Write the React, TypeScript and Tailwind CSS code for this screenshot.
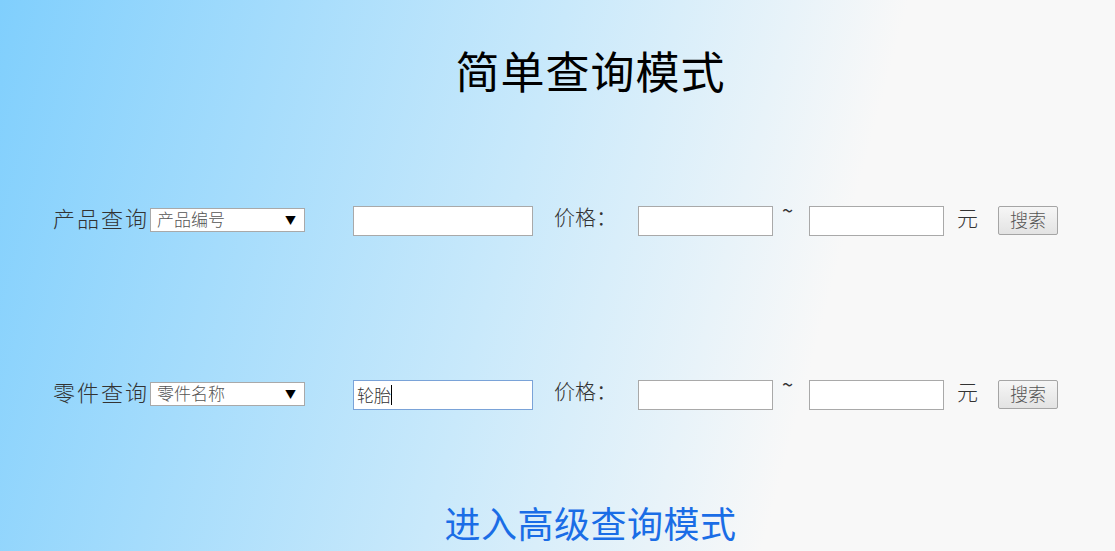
import React from "react";

const cjk = { fontFamily: '"Noto Sans CJK SC", "Noto Sans", sans-serif' };

function Row({ label, option, value }: { label: string; option: string; value?: string }) {
  return (
    <div className="flex items-center h-[30px] pl-[53px]" style={cjk}>
      <span className="text-[22px] font-light leading-none text-[#333] tracking-[2px] -mt-[9px]">{label}</span>
      <div className="ml-[1px] -mt-[2px] w-[155px] h-[24px] bg-white border border-[#a9a9a9] flex items-center justify-between pl-[6px] pr-[8px]">
        <span className="relative -top-[2px] text-[17px] font-light text-[#555] leading-none">{option}</span>
        <span className="text-[11px] text-black leading-none">▼</span>
      </div>
      {value ? (
        <div className="ml-[48px] w-[180px] h-[30px] bg-white border border-[#7aa3d8] flex items-center pl-[3px]">
          <span className="relative -top-[1px] text-[17px] font-light text-[#333] leading-none">{value}</span>
          <span className="w-px h-[20px] bg-black"></span>
        </div>
      ) : (
        <div className="ml-[48px] w-[180px] h-[30px] bg-white border border-[#a9a9a9]"></div>
      )}
      <span className="ml-[21px] text-[21px] font-light text-[#333] leading-none -mt-[9px]">价格：</span>
      <div className="ml-[21px] w-[135px] h-[30px] bg-white border border-[#a9a9a9]"></div>
      <span className="ml-[9px] w-[27px] self-start text-[20px] leading-none text-[#333] -mt-[6px]">~</span>
      <div className="w-[135px] h-[30px] bg-white border border-[#a9a9a9]"></div>
      <span className="ml-[13px] text-[21px] font-light text-[#333] leading-none -mt-[8px]">元</span>
      <div className="ml-[20px] -mt-[1px] w-[60px] h-[29px] bg-gradient-to-b from-[#f6f6f6] to-[#e3e3e3] border border-[#a5a5a5] rounded-[2px] flex items-center justify-center">
        <span className="relative -top-[2px] text-[18px] font-light text-[#555] leading-none">搜索</span>
      </div>
    </div>
  );
}

export default function App() {
  return (
    <div
      className="w-full h-[551px] overflow-hidden flex flex-col bg-[linear-gradient(105deg,#80cffd_0%,#c9e9fb_45%,#f8f8f8_72%,#f8f8f8_100%)]"
      style={cjk}
    >
      <div className="pt-[44px] pl-[66px] flex justify-center">
        <h1 className="text-[44px] leading-[52px] text-black tracking-[1px]">简单查询模式</h1>
      </div>
      <div className="mt-[110px]">
        <Row label="产品查询" option="产品编号" />
      </div>
      <div className="mt-[144px]">
        <Row label="零件查询" option="零件名称" value="轮胎" />
      </div>
      <div className="mt-[92px] pl-[66px] flex justify-center">
        <span className="text-[36px] leading-[40px] text-[#1a6de6] tracking-[0.5px]">进入高级查询模式</span>
      </div>
    </div>
  );
}
